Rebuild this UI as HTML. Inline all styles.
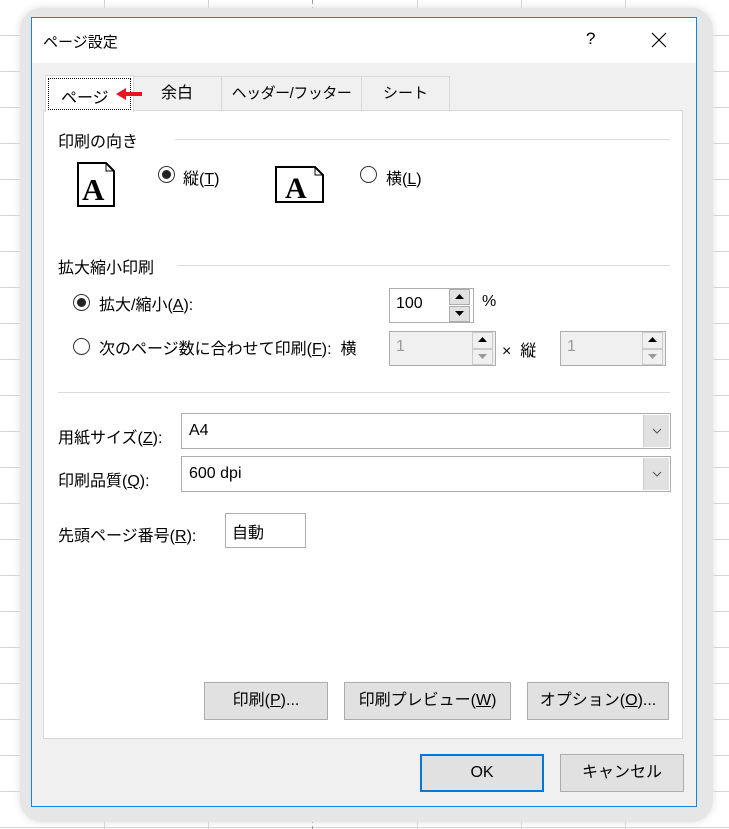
<!DOCTYPE html>
<html><head><meta charset="utf-8"><style>
*{margin:0;padding:0;box-sizing:border-box}
body{width:729px;height:829px;position:relative;overflow:hidden;background:#fff;font-family:"Liberation Sans","Noto Sans CJK JP",sans-serif;font-size:15px;color:#000}
.a{position:absolute;white-space:nowrap}
.sh{position:absolute;left:20px;top:8px;width:693px;height:814px;border-radius:22px;background:#e6e6e6;box-shadow:0 0 8px #ddd}
.dlg{position:absolute;left:31px;top:17px;width:666px;height:790px;border:1px solid #1883d7;background:#f0f0f0}
.tb{position:absolute;left:0;top:0;width:664px;height:45px;background:#fff}
.panel{position:absolute;left:11px;top:92px;width:640px;height:629px;background:#fff;border:1px solid #d9d9d9;font-size:16px}
.tab{position:absolute;top:58px;height:35px;border:1px solid #d9d9d9;border-bottom:none;background:#f0f0f0;text-align:center;line-height:34px}
.line{position:absolute;height:1px;background:#dcdcdc}
.rad{position:absolute;width:17px;height:17px;border:1px solid #333;border-radius:50%;background:#fff}
.rad.on::after{content:"";position:absolute;left:3px;top:3px;width:9px;height:9px;border-radius:50%;background:#222}
.box{position:absolute;border:1px solid #adadad;background:#fff}
.btn{position:absolute;border:1px solid #adadad;background:#e1e1e1;text-align:center;font-size:16px}
u{text-decoration:underline}
.spin{position:absolute;width:21px;border:1px solid #adadad;background:#e1e1e1}
</style></head><body>
<svg class="a" style="left:0;top:0" width="729" height="829">
<g stroke="#d4d4d4" stroke-width="1">
<line x1="104.5" y1="0" x2="104.5" y2="829"/><line x1="208.5" y1="0" x2="208.5" y2="829"/><line x1="417.5" y1="0" x2="417.5" y2="829"/><line x1="521.5" y1="0" x2="521.5" y2="829"/><line x1="625.5" y1="0" x2="625.5" y2="829"/>
<line x1="0" y1="35.5" x2="729" y2="35.5"/><line x1="0" y1="71.5" x2="729" y2="71.5"/><line x1="0" y1="107.5" x2="729" y2="107.5"/><line x1="0" y1="143.5" x2="729" y2="143.5"/><line x1="0" y1="179.5" x2="729" y2="179.5"/><line x1="0" y1="215.5" x2="729" y2="215.5"/><line x1="0" y1="251.5" x2="729" y2="251.5"/><line x1="0" y1="287.5" x2="729" y2="287.5"/><line x1="0" y1="323.5" x2="729" y2="323.5"/><line x1="0" y1="359.5" x2="729" y2="359.5"/><line x1="0" y1="395.5" x2="729" y2="395.5"/><line x1="0" y1="431.5" x2="729" y2="431.5"/><line x1="0" y1="467.5" x2="729" y2="467.5"/><line x1="0" y1="503.5" x2="729" y2="503.5"/><line x1="0" y1="539.5" x2="729" y2="539.5"/><line x1="0" y1="575.5" x2="729" y2="575.5"/><line x1="0" y1="611.5" x2="729" y2="611.5"/><line x1="0" y1="647.5" x2="729" y2="647.5"/><line x1="0" y1="683.5" x2="729" y2="683.5"/><line x1="0" y1="719.5" x2="729" y2="719.5"/><line x1="0" y1="755.5" x2="729" y2="755.5"/><line x1="0" y1="791.5" x2="729" y2="791.5"/><line x1="0" y1="827.5" x2="729" y2="827.5"/>
</g>
<line x1="312.5" y1="0" x2="312.5" y2="829" stroke="#999" stroke-dasharray="4,3"/>
</svg>
<div class="sh"></div>
<div class="dlg">
<div class="tb"></div>
<div class="a" style="left:11px;top:13px;font-size:15px">ページ設定</div>
<div class="a" style="left:554px;top:11px;font-size:17px">?</div>
<svg class="a" style="left:619px;top:14px" width="16" height="16"><path d="M1 1L15 15M15 1L1 15" stroke="#000" stroke-width="1.2"/></svg>
<div class="tab" style="left:189px;width:141px;letter-spacing:-0.5px">ヘッダー/フッター</div>
<div class="tab" style="left:329px;width:89px">シート</div>
<div class="tab" style="left:100px;width:90px;font-size:16px">余白</div>
<div class="panel">
<div class="a" style="left:14px;top:17px">印刷の向き</div><div class="line" style="left:131px;top:28px;width:495px"></div>
<svg class="a" style="left:33px;top:51px" width="40" height="46"><path d="M1 1H29L37 9V44H1Z" fill="#fff" stroke="#000" stroke-width="2"/><path d="M29 1V9H37" fill="none" stroke="#000"/><text x="5" y="38" font-family="Liberation Serif" font-weight="bold" font-size="31">A</text></svg>
<div class="rad on" style="left:114px;top:55px"></div><div class="a" style="left:139px;top:54px">縦(<u>T</u>)</div>
<svg class="a" style="left:231px;top:55px" width="50" height="38"><path d="M1 1H40L48 9V36H1Z" fill="#fff" stroke="#000" stroke-width="2"/><path d="M40 1V9H48" fill="none" stroke="#000"/><text x="10" y="32" font-family="Liberation Serif" font-weight="bold" font-size="30">A</text></svg>
<div class="rad" style="left:316px;top:55px"></div><div class="a" style="left:342px;top:54px">横(<u>L</u>)</div>
<div class="a" style="left:14px;top:143px">拡大縮小印刷</div><div class="line" style="left:133px;top:154px;width:493px"></div>
<div class="rad on" style="left:29px;top:183px"></div><div class="a" style="left:55px;top:180px">拡大/縮小(<u>A</u>):</div>
<div class="box" style="left:345px;top:177px;width:85px;height:35px"><span class="a" style="left:6px;top:6px;font-size:16px">100</span></div>
<div class="spin" style="left:405px;top:178px;height:16px"><svg width="19" height="14"><path d="M5 9L9.5 4L14 9Z"/></svg></div>
<div class="spin" style="left:405px;top:195px;height:16px"><svg width="19" height="14"><path d="M5 4L9.5 9L14 4Z"/></svg></div>
<div class="a" style="left:438px;top:182px;font-size:16px">%</div>
<div class="rad" style="left:29px;top:227px"></div><div class="a" style="left:55px;top:224px">次のページ数に合わせて印刷(<u>F</u>):&nbsp;&nbsp;横</div>
<div class="box" style="left:345px;top:220px;width:107px;height:35px;background:#f0f0f0"><span class="a" style="left:6px;top:6px;color:#999;font-size:16px">1</span></div>
<div class="spin" style="left:428px;top:221px;height:17px;background:#f0f0f0;border-color:#ccc"><svg width="19" height="14"><path d="M5 9L9.5 4L14 9Z"/></svg></div>
<div class="spin" style="left:428px;top:238px;height:16px;background:#f0f0f0;border-color:#ccc"><svg width="19" height="14"><path d="M5 4L9.5 9L14 4Z" fill="#999"/></svg></div>
<div class="a" style="left:458px;top:226px">×&nbsp;&nbsp;縦</div>
<div class="box" style="left:516px;top:220px;width:106px;height:35px;background:#f0f0f0"><span class="a" style="left:6px;top:6px;color:#999;font-size:16px">1</span></div>
<div class="spin" style="left:598px;top:221px;height:17px;background:#f0f0f0;border-color:#ccc"><svg width="19" height="14"><path d="M5 9L9.5 4L14 9Z"/></svg></div>
<div class="spin" style="left:598px;top:238px;height:16px;background:#f0f0f0;border-color:#ccc"><svg width="19" height="14"><path d="M5 4L9.5 9L14 4Z" fill="#999"/></svg></div>
<div class="line" style="left:14px;top:281px;width:612px"></div>
<div class="a" style="left:14px;top:313px">用紙サイズ(<u>Z</u>):</div>
<div class="box" style="left:137px;top:302px;width:490px;height:36px"><span class="a" style="left:7px;top:8px;font-size:16px">A4</span><div class="a" style="right:1px;top:1px;width:26px;height:32px;background:#e1e1e1;border-left:1px solid #ccc"><svg width="26" height="32"><path d="M9 14L13 18L17 14" fill="none" stroke="#555"/></svg></div></div>
<div class="a" style="left:14px;top:356px">印刷品質(<u>Q</u>):</div>
<div class="box" style="left:137px;top:345px;width:490px;height:36px"><span class="a" style="left:7px;top:8px;font-size:16px">600 dpi</span><div class="a" style="right:1px;top:1px;width:26px;height:32px;background:#e1e1e1;border-left:1px solid #ccc"><svg width="26" height="32"><path d="M9 14L13 18L17 14" fill="none" stroke="#555"/></svg></div></div>
<div class="a" style="left:14px;top:411px">先頭ページ番号(<u>R</u>):</div>
<div class="box" style="left:181px;top:402px;width:81px;height:35px"><span class="a" style="left:6px;top:5px">自動</span></div>
<div class="btn" style="left:160px;top:571px;width:124px;height:38px;line-height:36px">印刷(<u>P</u>)...</div>
<div class="btn" style="left:300px;top:571px;width:167px;height:38px;line-height:36px">印刷プレビュー(<u>W</u>)</div>
<div class="btn" style="left:483px;top:571px;width:142px;height:38px;line-height:36px">オプション(<u>O</u>)...</div>
</div>
<div class="a" style="left:13px;top:57px;width:89px;height:37px;background:#fff;border:1px solid #d9d9d9;border-bottom:none;font-size:16px"><div class="a" style="left:2px;top:2px;width:83px;height:32px;border:1px dotted #000"></div><span class="a" style="left:15px;top:8px">ページ</span><svg class="a" style="left:70px;top:11px" width="28" height="14"><path d="M0 7L10 1V5H26V9H10V13Z" fill="#e8141e"/></svg></div>
<div class="btn" style="left:388px;top:736px;width:124px;height:38px;line-height:34px;border:2px solid #0078d7">OK</div>
<div class="btn" style="left:528px;top:736px;width:124px;height:38px;line-height:36px">キャンセル</div>
</div>
</body></html>
